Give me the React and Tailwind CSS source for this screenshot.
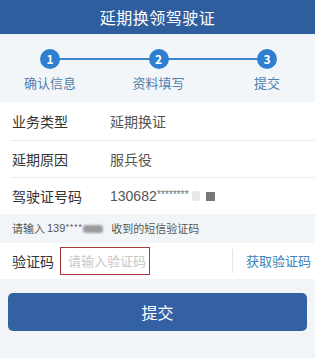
export default function App() {
  const font = { fontFamily: '"Noto Sans CJK SC", "Noto Sans", sans-serif' };
  return (
    <div className="w-[315px] h-[358px] bg-[#f2f5f8] flex flex-col" style={font}>
      <div className="h-[34px] bg-[#2f5e9e] flex items-center justify-center text-white text-[16px] tracking-[0.5px]">
        延期换领驾驶证
      </div>
      <div className="relative h-[68px] bg-[#f3f6f9] flex justify-between pl-[9px] pr-[7px] pt-[15px]">
        <div className="absolute left-[50px] right-[48px] top-[24px] h-[1.5px] bg-[#3b86cf]" />
        {[
          ["1", "确认信息"],
          ["2", "资料填写"],
          ["3", "提交"],
        ].map(([n, t]) => (
          <div key={n} className="relative w-[82px] flex flex-col items-center">
            <div className="w-[20px] h-[20px] rounded-full bg-[#2e7fd0] text-white text-[12px] font-bold flex items-center justify-center leading-none">
              {n}
            </div>
            <div className="mt-[5px] text-[13px] text-[#4f7fae] leading-[18px]">{t}</div>
          </div>
        ))}
      </div>
      <div className="bg-white flex flex-col">
        <div className="h-[38px] flex items-center pl-[12px] text-[14px] ml-0">
          <span className="w-[98px] text-[#333]">业务类型</span>
          <span className="text-[#555]">延期换证</span>
        </div>
        <div className="ml-[10px] h-px bg-[#ececec]" />
        <div className="h-[36px] flex items-center pl-[12px] text-[14px]">
          <span className="w-[98px] text-[#333]">延期原因</span>
          <span className="text-[#555]">服兵役</span>
        </div>
        <div className="ml-[10px] h-px bg-[#ececec]" />
        <div className="h-[36px] flex items-center pl-[12px] text-[14px]">
          <span className="w-[98px] text-[#333]">驾驶证号码</span>
          <span className="text-[#555] flex items-center" style={{ fontFamily: '"Liberation Sans", "Noto Sans CJK SC", sans-serif' }}>
            130682
            <span className="text-[11px] tracking-[-0.3px] text-[#777] relative top-[-2px]">********</span>
            <span className="ml-[3px] w-[8px] h-[10px] bg-[#e8e8e8] rounded-[2px]" />
            <span className="ml-[6px] w-[9px] h-[9px] bg-[#777]" />
          </span>
        </div>
      </div>
      <div className="h-[29px] flex items-center pl-[12px] text-[11px] text-[#555]">
        请输入 <span style={{ fontFamily: '"Liberation Sans", sans-serif' }} className="ml-[2px]">139</span>
        <span className="text-[9px] text-[#666] relative top-[-1px]">****</span>
        <span className="ml-[1px] w-[20px] h-[8px] bg-[#9a9a9a] rounded-[3px] blur-[1px]" />
        <span className="ml-[8px]">收到的短信验证码</span>
      </div>
      <div className="h-[36px] bg-white flex items-center pl-[12px]">
        <span className="text-[14px] text-[#333] w-[48px]">验证码</span>
        <div className="w-[90px] h-[28px] border-[1.5px] border-[#a8383b] flex items-center pl-[7px] text-[13px] text-[#c8c8c8]">
          请输入验证码
        </div>
        <div className="ml-[82px] w-px h-[24px] bg-[#e6e6e6]" />
        <span className="ml-[13px] text-[13px] text-[#3b82b8]">获取验证码</span>
      </div>
      <div className="px-[8px] pt-[14px]">
        <div className="h-[38px] rounded-[5px] bg-[#3461a3] flex items-center justify-center text-white text-[16px]">
          提交
        </div>
      </div>
    </div>
  );
}
